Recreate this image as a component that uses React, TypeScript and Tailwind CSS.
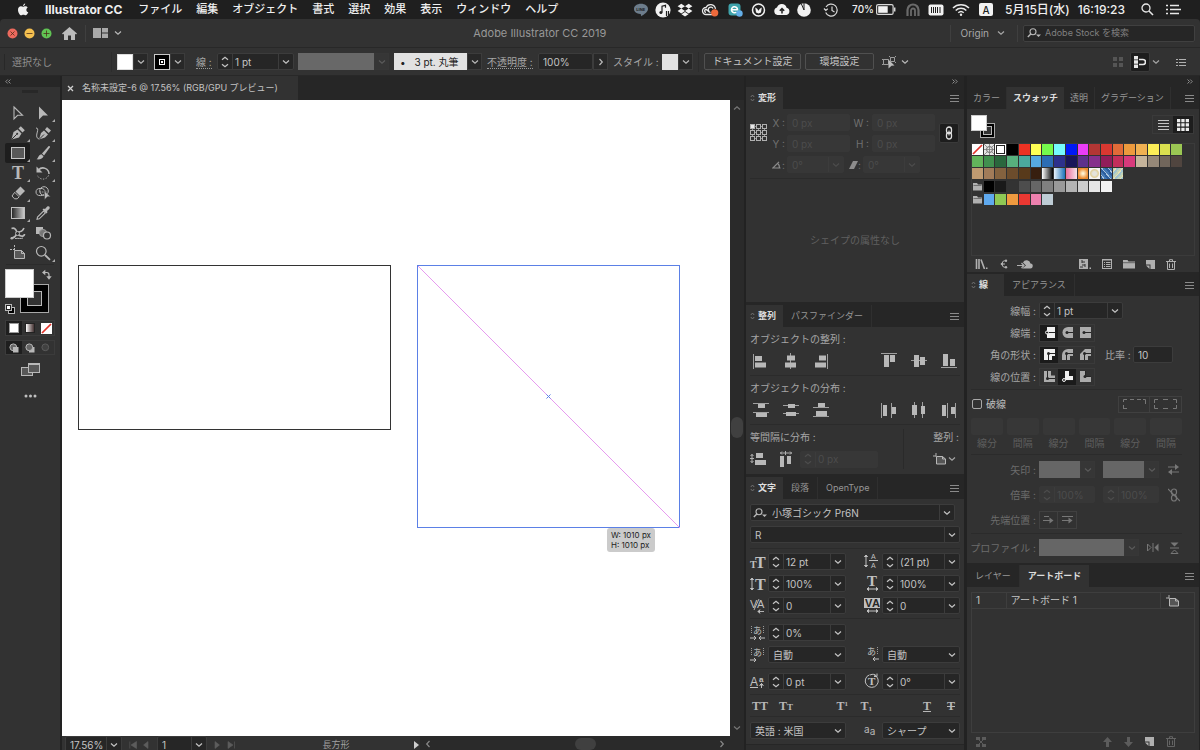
import type { ReactNode } from "react";

const FILE_MENUS = ["ファイル", "編集", "オブジェクト", "書式", "選択", "効果", "表示", "ウィンドウ", "ヘルプ"];

const SWATCH_ROWS: string[][] = [
  [
    "none", "registration", "white", "#000000", "#ec3223", "#ffff54", "#75fb4c", "#75fbfd", "#0019f5",
    "#ea3df7", "#b23634", "#d93831", "#e16b38", "#ed9a3d", "#f0b152", "#fcee57", "#dbe04f", "#9bc753",
  ],
  [
    "#62b45b", "#41904f", "#2a673d", "#57b07d", "#4ba99d", "#56a9e0", "#2c6db4", "#2d318c", "#1a1659",
    "#5d318c", "#86308c", "#911d5a", "#c32f5b", "#d83a7b", "#c5b49b", "#958878", "#71665b", "#50453f",
  ],
  [
    "#bf9a71", "#a17b59", "#84623f", "#6c4c2c", "#583a1b", "#371f0f",
    "linear-gradient(90deg,#ffffff,#000000)",
    "linear-gradient(90deg,#e8f2fb,#1c72b8)",
    "linear-gradient(90deg,#ec6f9c,#f5e3ea)",
    "radial-gradient(circle,#fff1d0 10%,#ee8b2f 70%)",
    "radial-gradient(circle,#e4e4dc 25%,#e0cf98 50%,#f4f4f4 65%)",
    "repeating-linear-gradient(50deg,#2d5f9e 0 2px,#a9c4de 2px 3px,#4479b5 3px 5px)",
    "repeating-linear-gradient(130deg,#c0d4b8 0 2px,#e8e0b0 2px 3px,#9fc4d0 3px 5px)",
  ],
];

const SWATCH_GROUPS: string[][] = [
  ["#000000", "#1a1a1a", "#333333", "#4d4d4d", "#666666", "#808080", "#999999", "#b3b3b3", "#cccccc", "#e6e6e6", "#f2f2f2"],
  ["#5fa9ee", "#8fc854", "#ef9a3f", "#eb3832", "#ed80ae", "#beccd5"],
];

const SERIF = "'Liberation Serif', serif";
const SANS = "'Liberation Sans', sans-serif";

function Svg({ w, h, children, className = "" }: { w: number; h: number; children: ReactNode; className?: string }) {
  return (
    <svg width={w} height={h} viewBox={`0 0 ${w} ${h}`} fill="none" className={`shrink-0 ${className}`} aria-hidden>
      {children}
    </svg>
  );
}

function Chevron({ className = "" }: { className?: string }) {
  return (
    <Svg w={8} h={6} className={className}>
      <path d="M1 1.5 4 4.3 7 1.5" stroke="currentColor" strokeWidth="1.2" />
    </Svg>
  );
}

function Steps({ label }: { label: string }) {
  return (
    <button aria-label={label} className="grid w-[15px] shrink-0 place-items-center border-r border-[#3c3c3c]">
      <Svg w={8} h={12}>
        <path d="M1 3.8 4 1.2l3 2.6M1 8.2l3 2.6 3-2.6" stroke="currentColor" strokeWidth="1.2" />
      </Svg>
    </button>
  );
}

function DropButton({ label, dim = false }: { label: string; dim?: boolean }) {
  return (
    <button
      aria-label={label}
      className={`grid h-[17px] w-[15px] shrink-0 place-items-center border ${
        dim ? "border-[#373737] bg-[#363636] text-[#5a5a5a]" : "border-[#3c3c3c] bg-[#282828] text-[#b9b9b9]"
      }`}
    >
      <Chevron />
    </button>
  );
}

function Field({
  label,
  value,
  className = "w-[78px]",
  steps = true,
  drop = true,
  dim = false,
}: {
  label: string;
  value: string;
  className?: string;
  steps?: boolean;
  drop?: boolean;
  dim?: boolean;
}) {
  return (
    <div
      className={`flex h-[17px] shrink-0 items-stretch rounded-[2px] border ${
        dim ? "border-[#373737] bg-[#373737] text-[#4c4c4c]" : "border-[#3c3c3c] bg-[#262626] text-[#c4c4c4]"
      } ${className}`}
    >
      {steps && <Steps label={`${label} 増減`} />}
      <input
        aria-label={label}
        defaultValue={value}
        className={`w-full min-w-0 bg-transparent text-[10px] leading-4 outline-none ${steps ? "pl-[2px]" : "pl-1"}`}
      />
      {drop && (
        <button aria-label={`${label} 一覧`} className="grid w-[15px] shrink-0 place-items-center border-l border-[#3c3c3c]">
          <Chevron />
        </button>
      )}
    </div>
  );
}

function Select({ label, value, className = "w-[78px]" }: { label: string; value: string; className?: string }) {
  return (
    <div className={`relative h-[17px] shrink-0 rounded-[2px] border border-[#3c3c3c] bg-[#262626] text-[#c4c4c4] ${className}`}>
      <select aria-label={label} className="block h-full w-full appearance-none bg-transparent pl-1 text-[10px] leading-4 outline-none">
        <option>{value}</option>
      </select>
      <Chevron className="pointer-events-none absolute right-[3px] top-[5px]" />
    </div>
  );
}

function Tabs({ items, active, collapsible = false, tight = false }: { items: string[]; active: number; collapsible?: boolean; tight?: boolean }) {
  return (
    <div role="tablist" className="flex h-[22px] shrink-0 items-stretch bg-[#262626] pr-[5px] text-[9px] leading-[22px]">
      {items.map((t, i) => {
        const on = i === active;
        return (
          <button
            key={t}
            role="tab"
            aria-selected={on}
            className={`flex shrink-0 items-center ${
              on && collapsible ? "min-w-[37px] gap-[3px] pl-1 pr-[6px]" : tight ? "px-[6px]" : "px-2"
            } ${on ? "bg-[#323232] font-semibold text-[#dedede]" : "border-r border-[#2f2f2f] text-[#969696]"}`}
          >
            {on && collapsible && (
              <Svg w={5} h={8}>
                <path d="M.8 3 2.5 1l1.700 2M.8 5l1.700 2 1.700-2" stroke="#777" strokeWidth=".9" />
              </Svg>
            )}
            {t}
          </button>
        );
      })}
      <button aria-label="パネルメニュー" className="ml-auto">
        <Svg w={9} h={8}>
          <path d="M0 1.500h9M0 4.500h9M0 7.500h9" stroke="#8a8a8a" />
        </Svg>
      </button>
    </div>
  );
}

function Divider({ className = "" }: { className?: string }) {
  return <hr className={`border-0 border-t border-[#2b2b2b] ${className}`} />;
}

/* ---------- macOS menu bar ---------- */

function MenuBar() {
  return (
    <header className="flex h-[19px] shrink-0 items-center whitespace-nowrap bg-[#1f1f1f] pl-[17px] pr-[19px] text-[11px] font-medium leading-[19px] text-[#efefef]">
      <Svg w={12} h={14}>
        <path
          fill="#efefef"
          d="M8.2.6c.1 1-.8 2.400-2.200 2.500C5.900 2 7 .8 8.200.6ZM6.100 3.800c.6 0 1.200-.6 2.200-.6 1 0 1.900.5 2.400 1.300-2 1.300-1.700 4 .6 4.800-.6 1.500-1.600 3-2.700 3-.9 0-1.100-.5-2.200-.5s-1.400.5-2.200.5C2.800 12.300 1 9.200 1 6.900c0-2.300 1.400-3.600 2.900-3.600.9 0 1.600.5 2.200.5Z"
        />
      </Svg>
      <b className="ml-4 mr-[9px] text-xs font-bold leading-[19px]">Illustrator CC</b>
      <nav className="flex">
        {FILE_MENUS.map((m) => (
          <button key={m} className="px-[7px]">
            {m}
          </button>
        ))}
      </nav>
      <div className="ml-auto flex items-center">
        <Svg w={16} h={14} className="mr-[6px]">
          <path d="M8 .8c4 0 7 2.200 7 5.200 0 2.700-3.500 5.400-7 7.200.3-1.400 0-2-.7-2.200C3.600 10.600 1 8.800 1 6c0-3 3-5.200 7-5.200Z" fill="#6d7d8c" />
          <text x="3.300" y="7.800" fontSize="4" fontWeight="700" fill="#1f1f1f">LINE</text>
        </Svg>
        <Svg w={17} h={16} className="mr-[5px]">
          <circle cx="8" cy="8" r="7.600" fill="#f2f2f2" />
          <path d="M7 10.500V4.200l3.500-.9v2.500M11.500 9v5M13.500 9v5" stroke="#1f1f1f" strokeWidth="1.200" />
          <circle cx="5.900" cy="10.500" r="1.500" fill="#1f1f1f" />
        </Svg>
        <Svg w={16} h={14} className="mr-[8px]">
          <path d="m4.300.8 3.700 2.400-3.700 2.400L.6 3.200Zm7.400 0 3.700 2.400-3.700 2.400L8 3.200ZM4.300 5.600 8 8l-3.700 2.400L.6 8Zm7.400 0L15.400 8l-3.700 2.400L8 8ZM8 9l3.500 2.300L8 13.500l-3.500-2.200Z" fill="#f2f2f2" />
        </Svg>
        <Svg w={18} h={14} className="mr-[9px]">
          <path d="M5 11.500a3.500 3.500 0 0 1 0-7 5 5 0 0 1 9.500 1.300M5 9.300a1.400 1.400 0 0 1 0-2.800c1.200 0 2.300 2.800 4.500 2.800M12 5.500a2.500 2.500 0 1 0-3.500 3.300M5 11.500h6" stroke="#e8e8e8" strokeWidth="1.300" />
          <circle cx="13.700" cy="9.800" r="3.600" fill="#ee6a3c" />
        </Svg>
        <Svg w={15} h={14} className="mr-[8px]">
          <rect x=".5" y=".5" width="12" height="12" rx="3" fill="#3fa3ab" />
          <path d="M3.500 6.800h6a3 3 0 1 0-1 2.200" stroke="#fff" strokeWidth="1.600" />
          <circle cx="11.500" cy="10.500" r="3.200" fill="#64aee8" />
        </Svg>
        <Svg w={15} h={14} className="mr-[7px]">
          <circle cx="7.500" cy="7" r="6" stroke="#f2f2f2" strokeWidth="1.500" />
          <path d="M4.200 4.500 5 9.500l2.500 1 2.500-1 .8-5-2 1.200-1.300 2-1.300-2Z" fill="#f2f2f2" />
        </Svg>
        <Svg w={18} h={13} className="mr-[6px]">
          <path d="M4.500 12A3.800 3.800 0 0 1 4 4.600a5 5 0 0 1 9.600.2A3.700 3.700 0 0 1 13.500 12Z" fill="#f2f2f2" />
          <path d="M9 10.500V6M6.800 7.700 9 5.500l2.200 2.200" stroke="#1f1f1f" strokeWidth="1.500" />
        </Svg>
        <Svg w={14} h={14} className="mr-[12px]">
          <circle cx="7" cy="7" r="6.800" fill="#f2f2f2" />
          <path d="M7 7 4.200.5M7 7V0" stroke="#1f1f1f" strokeWidth="1" />
        </Svg>
        <Svg w={16} h={14} className="mr-[13px]">
          <path d="M3 4a6 6 0 1 1-.3 5.500M1 5.500l1.800 2 2-1.700M9 3.500v4l2.500 1.500" stroke="#d8d8d8" strokeWidth="1.200" />
        </Svg>
        <span className="mr-[2px] text-[10px]">70%</span>
        <Svg w={20} h={11} className="mr-[10px]">
          <rect x=".6" y=".6" width="16.500" height="9.800" rx="1.500" stroke="#d8d8d8" strokeWidth="1.200" />
          <rect x="2.200" y="2.200" width="9.500" height="6.600" fill="#f2f2f2" />
          <path d="M18.700 3.500v4" stroke="#d8d8d8" strokeWidth="1.500" />
        </Svg>
        <Svg w={14} h={14} className="mr-[8px]">
          <path d="M1.500 13V7a5.500 5.500 0 0 1 11 0v6" stroke="#6a6a6a" strokeWidth="2.200" />
          <path d="M5 13V7.500a2 2 0 0 1 4 0V13" stroke="#6a6a6a" strokeWidth="1.800" />
        </Svg>
        <Svg w={16} h={12} className="mr-[8px]">
          <rect x=".5" y=".5" width="15" height="11" rx="2" fill="#f2f2f2" />
          <path d="M3.500 3v6M5.500 3v6M7.500 3v6M9.500 3v6M12 3v6" stroke="#1f1f1f" />
        </Svg>
        <Svg w={18} h={13} className="mr-[9px]">
          <path d="M1 5a11.500 11.500 0 0 1 16 0M3.700 7.500a7.500 7.500 0 0 1 10.600 0M6.300 9.800a3.900 3.900 0 0 1 5.400 0" stroke="#e8e8e8" strokeWidth="1.500" />
          <circle cx="9" cy="11.700" r="1.200" fill="#e8e8e8" />
        </Svg>
        <span className="mr-[12px] grid h-[13px] w-[14px] place-items-center rounded-[2px] bg-[#f2f2f2] text-[10px] leading-none text-[#1f1f1f]">A</span>
        <span className="mr-[8px] text-xs leading-[19px]">5月15日(水)</span>
        <span className="mr-4 text-xs leading-[19px]">16:19:23</span>
        <Svg w={13} h={13} className="mr-[12px]">
          <circle cx="5" cy="5" r="4" stroke="#e8e8e8" strokeWidth="1.300" />
          <path d="m8 8 4 4" stroke="#e8e8e8" strokeWidth="1.600" />
        </Svg>
        <Svg w={15} h={11}>
          <path d="M4 1.500h9M4 5.500h11M4 9.500h9M0 1.500h2M0 5.500h2M0 9.500h2" stroke="#e8e8e8" strokeWidth="1.700" />
        </Svg>
      </div>
    </header>
  );
}

function TitleBar() {
  return (
    <div className="flex h-[29px] shrink-0 items-center rounded-t border-b border-[#282828] bg-[#323232] pl-[7px] pr-[5px]">
      <div className="flex gap-[6px]">
        {[
          ["#ec6a5e", "m3.500 3.500 4 4m0-4-4 4", "閉じる"],
          ["#f4bf4f", "M2.500 5.500h6", "しまう"],
          ["#61c454", "M2.500 5.500h6m-3-3v6", "拡大"],
        ].map(([fill, d, name]) => (
          <button key={fill} aria-label={name}>
            <Svg w={11} h={11}>
              <circle cx="5.500" cy="5.500" r="5" fill={fill} />
              <path d={d} stroke="#4a2a16" strokeWidth="1" opacity=".75" />
            </Svg>
          </button>
        ))}
      </div>
      <button aria-label="ホーム" className="ml-[10px]">
        <Svg w={15} h={13}>
          <path d="M7.500 0 15 6.500l-1 1-1-.8V13H9V8.500H6V13H2V6.700l-1 .8-1-1Z" fill="#bcbcbc" />
        </Svg>
      </button>
      <span className="ml-2 mr-[7px] h-[17px] w-px bg-[#3f3f3f]" />
      <button aria-label="ワークスペース配置" className="flex items-center gap-[6px] text-[#b9b9b9]">
        <Svg w={15} h={10}>
          <path d="M0 0h8v10H0ZM9 0h6v4.500H9ZM9 5.500h6V10H9Z" fill="#a9a9a9" />
        </Svg>
        <Chevron />
      </button>
      <h1 className="flex-1 pl-2 text-center text-[11px] leading-4 text-[#989898]">Adobe Illustrator CC 2019</h1>
      <span className="mr-[10px] h-[17px] w-px bg-[#3f3f3f]" />
      <button className="flex items-center gap-2 text-[10px] leading-4 text-[#a8a8a8]">
        Origin <Chevron />
      </button>
      <span className="ml-3 mr-[5px] h-[17px] w-px bg-[#3f3f3f]" />
      <label className="flex h-[17px] w-[172px] items-center gap-1 rounded-[2px] border border-[#404040] bg-[#262626] pl-[3px]">
        <SearchGlyph />
        <input placeholder="Adobe Stock を検索" className="w-full min-w-0 bg-transparent text-[9px] leading-4 outline-none placeholder:text-[#808080]" />
      </label>
    </div>
  );
}

function SearchGlyph() {
  return (
    <Svg w={14} h={10}>
      <circle cx="6" cy="3.800" r="3" stroke="#b9b9b9" strokeWidth="1.100" />
      <path d="M3.800 6 .8 9" stroke="#b9b9b9" strokeWidth="1.400" />
      <path d="M9 6.500h5l-2.500 2.500Z" fill="#b9b9b9" />
    </Svg>
  );
}

function ControlBar() {
  return (
    <div className="flex h-[28px] shrink-0 items-center whitespace-nowrap border-b border-[#282828] bg-[#323232] pr-[14px] text-[10px] leading-4 text-[#a6a6a6]">
      <span className="ml-1 mr-[7px] h-4 w-px bg-[#282828]" />
      <span className="w-[99px] text-[#8f8f8f]">選択なし</span>
      <span className="mr-[5px] h-5 w-px bg-[#2c2c2c]" />
      <button aria-label="塗り" className="h-4 w-4 border border-[#ddd] bg-white" />
      <DropButton label="塗り 一覧" />
      <button aria-label="線の色" className="ml-[6px] grid h-4 w-4 place-items-center border border-[#c8c8c8] bg-black">
        <span className="grid h-[6px] w-[6px] place-items-center border border-white bg-black">
          <span className="h-[2px] w-[2px] bg-white" />
        </span>
      </button>
      <DropButton label="線の色 一覧" />
      <span className="ml-[11px] w-[21px]">
        <span className="border-b border-dotted border-[#999]">線 :</span>
      </span>
      <Field label="線幅" value="1 pt" className="w-[77px]" />
      <span className="ml-1 h-[17px] w-[76px] bg-[#686868]" />
      <DropButton label="可変線幅プロファイル" dim />
      <button className="ml-[5px] h-[17px] w-[73px] bg-[#e2e2e2] text-left text-[#222]">
        <span className="px-[6px]">•</span> 3 pt. 丸筆
      </button>
      <DropButton label="ブラシ定義" />
      <span className="ml-[5px] w-[51px]">
        <span className="border-b border-dotted border-[#999]">不透明度 :</span>
      </span>
      <Field label="不透明度" value="100%" className="w-[55px]" steps={false} drop={false} />
      <button aria-label="不透明度スライダー" className="grid h-[17px] w-[15px] place-items-center border border-[#3c3c3c] bg-[#282828] text-[#b9b9b9]">
        <Chevron className="-rotate-90" />
      </button>
      <span className="ml-[5px] w-[49px]">スタイル :</span>
      <button aria-label="グラフィックスタイル" className="h-4 w-4 bg-[#e2e2e2]" />
      <DropButton label="グラフィックスタイル 一覧" />
      <span className="mx-[5px] h-5 w-px bg-[#2c2c2c]" />
      <button className="h-[17px] w-[97px] rounded-[2px] border border-[#505050] leading-[15px] text-[#c4c4c4]">ドキュメント設定</button>
      <button className="ml-1 h-[17px] w-[69px] rounded-[2px] border border-[#505050] leading-[15px] text-[#c4c4c4]">環境設定</button>
      <button aria-label="類似オブジェクトを選択" className="ml-2 flex items-center gap-1 text-[#b9b9b9]">
        <Svg w={15} h={14}>
          <path d="M1.500 4.500h5v5h-5ZM8.500 2.500h4v4h-4ZM0 4.500h1.500M0 9.500h1.500M7 1l1.500 1.500M14 1l-1.500 1.500M14 8l-1.500-1.500" stroke="#9c9c9c" />
          <path d="m6.500 4.500 6 6-3 .2-3 2.800Z" fill="#bdbdbd" />
        </Svg>
        <Chevron />
      </button>
      <Svg w={11} h={10} className="ml-auto">
        <path d="M0 0h4v4H0ZM6 0h4v4H6ZM0 6h4v4H0ZM6 6h4v4H6Z" fill="#555" />
      </Svg>
      <button aria-label="整列オプション" className="ml-[6px] grid h-5 w-5 place-items-center rounded-[2px] border border-[#3a3a3a] bg-[#1d1d1d]">
        <Svg w={12} h={12}>
          <path d="M0 0h4v3.500H0ZM0 4.300h4v3.500H0ZM0 8.500h4V12H0Z" fill="#e8e8e8" />
          <path d="M5 3.500h4a2.500 2.500 0 0 1 0 5H5" stroke="#e8e8e8" strokeWidth="1.600" />
        </Svg>
      </button>
      <Chevron className="ml-[2px]" />
      <button aria-label="コントロールメニュー" className="ml-4">
        <Svg w={10} h={8}>
          <path d="M3 1.500h7M3 4.500h7M3 7.500h7M0 1.500h2M0 4.500h2M0 7.500h2" stroke="#b0b0b0" />
        </Svg>
      </button>
    </div>
  );
}

/* ---------- Tool palette ---------- */

const FILL = "#b8b8b8";

const TOOLS: Array<{ name: string; more?: boolean; art: ReactNode }> = [
  { name: "選択", art: <path d="m4 2 8.500 8.300H7.600L4 14Z" stroke={FILL} strokeWidth="1.100" /> },
  { name: "ダイレクト選択", more: true, art: <path d="m4 1.500 9 9H8l-4 4Z" fill={FILL} /> },
  {
    name: "ペン",
    more: true,
    art: (
      <>
        <path d="M1.500 14.500 3.500 7l4-2.500 4 4L9 12.500Z" fill={FILL} />
        <path d="m8.500 3.500 2.300-2.300 4 4-2.300 2.300Z" fill={FILL} />
        <path d="M1.500 14.500 6.800 9.200" stroke="#323232" />
        <circle cx="7.200" cy="8.800" r="1" fill="#323232" />
      </>
    ),
  },
  {
    name: "曲線",
    more: true,
    art: (
      <>
        <path d="M4 14.500 6 8l3-2.500 4 4L10 12.500Z" fill={FILL} />
        <path d="m10 4.500 2-2.500 4 3.500-2.300 2.500Z" fill={FILL} />
        <path d="M4.500 14 9 9.500" stroke="#323232" />
        <path d="M1 3c2 0 2 1.500 1.300 4-.6 2.500-1.600 6 1.700 7" stroke={FILL} />
      </>
    ),
  },
  { name: "長方形", more: true, art: <rect x="1.500" y="2.500" width="13" height="11" fill="#585858" stroke="#c6c6c6" /> },
  {
    name: "ブラシ",
    more: true,
    art: (
      <>
        <path d="m7 8.500 6.500-7.300c.8-.6 1.800.3 1.300 1.200L9 10.500Z" fill={FILL} />
        <path d="M6.300 9.200 8.500 11.300C8 13.500 5 14.800 1.500 14.300 3.500 13.300 3 10 6.300 9.200Z" fill={FILL} />
      </>
    ),
  },
  {
    name: "文字",
    more: true,
    art: (
      <text x="8" y="14" textAnchor="middle" fontSize="18" fontWeight="700" fontFamily={SERIF} fill={FILL}>
        T
      </text>
    ),
  },
  {
    name: "回転",
    more: true,
    art: (
      <>
        <path d="M3.500 5a6 6 0 0 1 10.500 4" stroke={FILL} strokeWidth="1.500" />
        <path d="M1.500 1.500v6h6Z" fill={FILL} />
        <path d="M13.500 10.500A6 6 0 0 1 2.300 10" stroke={FILL} strokeDasharray="1.300 1.500" />
      </>
    ),
  },
  {
    name: "消しゴム",
    more: true,
    art: (
      <>
        <path d="m5.500 6.500 5-5 4.500 4.500-5 5Z" fill={FILL} />
        <path d="m4.700 7.300 4.500 4.500-2 2H4.500L2 11Z" stroke={FILL} />
      </>
    ),
  },
  {
    name: "シェイプ形成",
    art: (
      <>
        <ellipse cx="5.500" cy="7" rx="4.500" ry="3.600" stroke={FILL} />
        <circle cx="9" cy="6" r="4.300" stroke={FILL} />
        <path d="M5 7h7" stroke={FILL} strokeDasharray="1.200 1" />
        <path d="m9.500 6 6 5.700h-3l-3 3Z" fill={FILL} stroke="#323232" strokeWidth=".5" />
      </>
    ),
  },
  {
    name: "グラデーション",
    more: true,
    art: (
      <>
        <defs>
          <linearGradient id="toolGradient">
            <stop stopColor="#222" />
            <stop offset="1" stopColor="#d0d0d0" />
          </linearGradient>
        </defs>
        <rect x="1.500" y="2.500" width="13" height="11" fill="url(#toolGradient)" stroke="#c0c0c0" />
      </>
    ),
  },
  {
    name: "スポイト",
    art: (
      <>
        <path d="M2 14.300 2.500 12l6-6L10.300 8l-6 5.800Z" stroke={FILL} strokeWidth="1.100" />
        <path d="m7.500 4.500 1.300-1 1.200.6 2-2.300c2-1.300 3.500.5 2.300 2.200L12 6l.5 1.300-1.200 1.200Z" fill={FILL} />
      </>
    ),
  },
  {
    name: "パペットワープ",
    art: (
      <>
        <path d="M1.500 3.500c3-1 4.500.5 5.500 4 .5 2 2 3 4 3.500 2 .4 3.500-.5 3.500-2" stroke={FILL} strokeWidth="1.700" />
        <path d="M1 13c2.500.5 4-1 5.500-3.500 1.500-2.500 2.500-3 4-3 1.800 0 2.500-1.500 3.500-3.500" stroke={FILL} strokeWidth="1.500" />
        <path d="M5 13.500c3-.5 6 .5 8-.5" stroke={FILL} />
        <circle cx="7.500" cy="8.500" r="2" fill="#323232" stroke={FILL} />
        <circle cx="1.800" cy="13.300" r="1.300" fill={FILL} />
      </>
    ),
  },
  {
    name: "ブレンド",
    art: (
      <>
        <rect x="1" y="2" width="7" height="7" fill={FILL} />
        <circle cx="8" cy="8" r="3.600" fill="#777" stroke="#999" />
        <circle cx="12" cy="10.500" r="3.500" fill="#323232" stroke={FILL} strokeWidth="1.200" />
      </>
    ),
  },
  {
    name: "アートボード",
    art: (
      <>
        <path d="M4.500 0v5M0 4.500h4" stroke={FILL} strokeDasharray="2 1" />
        <path d="M4.500 5.500h7l3 3v5h-10Z" fill="#585858" stroke={FILL} />
        <path d="M11.500 5.500v3h3" stroke={FILL} />
      </>
    ),
  },
  {
    name: "ズーム",
    more: true,
    art: (
      <>
        <circle cx="6.300" cy="6.300" r="4.800" stroke={FILL} strokeWidth="1.200" />
        <path d="m10 10 5 4.800" stroke={FILL} strokeWidth="1.800" />
      </>
    ),
  },
];

function ToolPalette() {
  return (
    <aside className="flex w-[62px] shrink-0 flex-col border-r-2 border-[#222] bg-[#323232]">
      <div className="flex h-[11px] shrink-0 items-center bg-[#262626] pl-[5px]">
        <Svg w={6} h={5}>
          <path d="M2.800.5.800 2.500l2 2M5.500.5l-2 2 2 2" stroke="#999" strokeWidth=".9" />
        </Svg>
      </div>
      <div className="mx-auto mb-[10px] mt-[3px] h-[3px] w-4 shrink-0 bg-[#282828]" />
      <div className="ml-[5px] grid w-[50px] grid-cols-2">
        {TOOLS.map((t) => (
          <button
            key={t.name}
            aria-label={t.name}
            className={`relative flex h-5 items-center justify-center rounded-[2px] ${t.name === "長方形" ? "bg-[#1e1e1e]" : ""}`}
          >
            <Svg w={16} h={16} className="overflow-visible">
              {t.art}
            </Svg>
            {t.more && (
              <Svg w={3} h={3} className="absolute bottom-[1px] right-0">
                <path d="M3 0v3H0Z" fill="#aaa" />
              </Svg>
            )}
          </button>
        ))}
      </div>
      <Divider className="mx-[6px] mt-[1px]" />
      <div className="relative ml-[5px] mt-1 h-[45px] w-[50px] shrink-0">
        <button aria-label="線" className="absolute left-[15px] top-[15px] grid h-[29px] w-[29px] place-items-center border border-[#a8a8a8] bg-black">
          <span className="h-[15px] w-[15px] border border-[#b8b8b8] bg-[#323232]" />
        </button>
        <button aria-label="塗り" className="absolute left-0 top-0 h-[29px] w-[29px] border border-[#ccc] bg-white" />
        <button aria-label="塗りと線を入れ替え" className="absolute right-[3px] top-0">
          <Svg w={10} h={11}>
            <path d="M2.500 3.500h2.300C6.300 3.500 7 4.300 7 6v2" stroke={FILL} strokeWidth="1.200" />
            <path d="M3.300.8v5.400L0 3.500ZM4.300 7.300h5.400L7 10.800Z" fill={FILL} />
          </Svg>
        </button>
        <button aria-label="初期設定の塗りと線" className="absolute bottom-0 left-0">
          <Svg w={10} h={11}>
            <rect x="3.500" y="4.500" width="6" height="6" fill="#000" stroke={FILL} />
            <rect x=".5" y="1.500" width="6" height="6" fill="#222" stroke={FILL} />
            <rect x="2" y="3" width="3" height="3" fill="#fff" />
          </Svg>
        </button>
      </div>
      <div className="ml-[5px] mt-[6px] grid h-4 w-[50px] shrink-0 grid-cols-3 border border-[#3b3b3b]">
        <button aria-label="カラー" className="grid place-items-center bg-[#1e1e1e]">
          <span className="h-[10px] w-[10px] border border-[#999] bg-white" />
        </button>
        <button aria-label="グラデーション塗り" className="grid place-items-center">
          <span className="h-[10px] w-[10px] border border-[#222] bg-linear-to-r from-white to-[#433]" />
        </button>
        <button aria-label="なし" className="grid place-items-center">
          <NoneSwatch />
        </button>
      </div>
      <div className="ml-[5px] mt-1 grid h-[15px] w-[50px] shrink-0 grid-cols-3 border border-[#3b3b3b]">
        {["標準描画", "背面描画", "内側描画"].map((n, i) => (
          <button key={n} aria-label={n} className={`grid place-items-center ${i === 0 ? "bg-[#1e1e1e]" : ""}`}>
            <Svg w={10} h={10} className={i === 2 ? "opacity-30" : ""}>
              {i === 1 && <rect x="4" y="4" width="5.500" height="5.500" fill={FILL} />}
              <circle cx="4.300" cy="4.300" r="3.400" fill="#666" stroke={FILL} />
              {i === 0 && <rect x="4" y="4" width="5.500" height="5.500" fill={FILL} />}
            </Svg>
          </button>
        ))}
      </div>
      <button aria-label="スクリーンモード" className="mx-auto mt-2">
        <Svg w={19} h={14}>
          <rect x=".5" y="4.500" width="11" height="8" fill="#585858" stroke={FILL} />
          <rect x="7.500" y=".5" width="11" height="9" fill="#585858" stroke={FILL} />
          <path d="M7 1.500h12" stroke={FILL} />
        </Svg>
      </button>
      <button aria-label="ツールバーを編集" className="mx-auto mt-[17px]">
        <Svg w={13} h={4}>
          <circle cx="2" cy="2" r="1.500" fill="#c0c0c0" />
          <circle cx="6.500" cy="2" r="1.500" fill="#c0c0c0" />
          <circle cx="11" cy="2" r="1.500" fill="#c0c0c0" />
        </Svg>
      </button>
    </aside>
  );
}

function NoneSwatch() {
  return (
    <Svg w={11} h={11}>
      <rect width="11" height="11" fill="#fff" />
      <path d="M1 10 10 1" stroke="#e3342b" strokeWidth="1.700" />
    </Svg>
  );
}

/* ---------- Document window ---------- */

function DocumentWindow() {
  return (
    <main className="flex min-w-0 flex-1 flex-col bg-[#262626]">
      <div className="flex h-6 shrink-0">
        <div className="flex items-center gap-2 bg-[#323232] pl-[5px] pr-5 text-[9px] text-[#c4c4c4]">
          <button aria-label="ドキュメントを閉じる">
            <Svg w={7} h={7}>
              <path d="m1 1 5 5m0-5L1 6" stroke="#d0d0d0" strokeWidth="1.300" />
            </Svg>
          </button>
          名称未設定-6 @ 17.56% (RGB/GPU プレビュー)
        </div>
      </div>
      <div className="flex min-h-0 flex-1">
        <div className="relative min-w-0 flex-1 overflow-hidden bg-white">
          <Svg w={668} h={636}>
            <rect x="16.500" y="165.500" width="312" height="164" stroke="#333" />
            <rect x="355.500" y="165.500" width="262" height="262" stroke="#5b80e6" />
            <path d="m356 166 262 262" stroke="#e79bf0" />
            <path d="m484.500 294.500 4 4m0-4-4 4" stroke="#5b80e6" />
          </Svg>
          <div className="absolute left-[545px] top-[428px] rounded-[3px] bg-[#cbcbcb] px-1 py-[2px] text-[8px] leading-[10px] text-[#222]">
            W: 1010 px
            <br />
            H: 1010 px
          </div>
        </div>
        <div className="flex w-[14px] shrink-0 flex-col items-center justify-between bg-[#2a2a2a] py-[5px] text-[#777]">
          <Chevron className="rotate-180" />
          <span className="mt-[18px] h-[21px] w-3 rounded-md bg-[#404040]" />
          <Chevron />
        </div>
      </div>
      <footer className="flex h-[14px] shrink-0 items-start overflow-hidden bg-[#2a2a2a] text-[#b0b0b0]">
        <div className="flex h-[17px] w-[358px] items-center bg-[#323232] pl-[3px]">
          <Field label="ズーム" value="17.56%" className="w-[57px]" steps={false} />
          <Svg w={24} h={8} className="ml-[7px]">
            <path d="M.8.500v7M7.500.500v7L2 4ZM19 .5v7L14.500 4Z" fill="#5c5c5c" stroke="#5c5c5c" strokeWidth=".6" />
          </Svg>
          <Field label="アートボード番号" value="1" className="ml-1 w-[50px]" steps={false} />
          <Svg w={22} h={8} className="ml-[7px]">
            <path d="M1 .5v7L5.500 4ZM14 .5v7L19 4ZM20.500.500v7" fill="#5c5c5c" stroke="#5c5c5c" strokeWidth=".6" />
          </Svg>
          <span className="flex-1 pl-[22px] text-center text-[9px] leading-4 text-[#a0a0a0]">長方形</span>
          <Svg w={6} h={8}>
            <path d="M0 0v8l5-4Z" fill="#d0d0d0" />
          </Svg>
        </div>
        <div className="flex h-[15px] flex-1 items-center justify-between pl-1 pr-[18px] text-[#888]">
          <Chevron className="rotate-90" />
          <span className="ml-5 h-3 w-[21px] rounded-full bg-[#404040]" />
          <Chevron className="-rotate-90" />
        </div>
      </footer>
    </main>
  );
}

/* ---------- Transform / Align / Character ---------- */

function CollapseStrip() {
  return (
    <div className="flex h-[11px] shrink-0 items-center justify-end bg-[#262626] pr-[6px]">
      <Svg w={6} h={5}>
        <path d="m.5.500 2 2-2 2M3.200.500l2 2-2 2" stroke="#999" strokeWidth=".9" />
      </Svg>
    </div>
  );
}

function TransformPanel() {
  return (
    <section className="flex h-[215px] shrink-0 flex-col bg-[#323232]">
      <Tabs items={["変形"]} active={0} collapsible />
      <div className="flex pl-1 pr-[5px] pt-[5px]">
        <Svg w={17} h={17} className="mt-[10px]">
          <path d="M2.500 2.500h12v12h-12ZM8.500 2.500v12M2.500 8.500h12" stroke="#909090" />
          {[2.5, 8.5, 14.5].map((y) =>
            [2.5, 8.5, 14.5].map((x) => (
              <rect key={`${x}-${y}`} x={x - 2} y={y - 2} width="4" height="4" fill={x + y === 5 ? "#e8e8e8" : "#323232"} stroke="#b0b0b0" />
            )),
          )}
        </Svg>
        <div className="flex flex-1 flex-col gap-1 text-[10px] leading-4 text-[#707070]">
          {[
            ["X :", "W :"],
            ["Y :", "H :"],
          ].map(([a, b]) => (
            <div key={a} className="flex items-center">
              <span className="w-5 pr-[2px] text-right">{a}</span>
              <Field label={a} value="0 px" dim steps={false} drop={false} className="w-[63px]" />
              <span className="w-[22px] pr-[3px] text-right">{b}</span>
              <Field label={b} value="0 px" dim steps={false} drop={false} className="w-[63px]" />
            </div>
          ))}
          <div className="flex items-center">
            <span className="flex w-5 items-center justify-end pr-[2px]">
              <Svg w={10} h={8}>
                <path d="M8.500 7H.8L7 .8M5.500 2.300c1.500 1 2 2.700 2 4.700" stroke="#8c8c8c" strokeWidth="1.200" />
              </Svg>
              :
            </span>
            <Field label="回転角度" value="0°" dim steps={false} className="w-[57px]" />
            <span className="flex w-[19px] items-center justify-end pr-[2px]">
              <Svg w={9} h={8}>
                <path d="M4 0h5L5 8H0Z" fill="#8c8c8c" />
              </Svg>
              :
            </span>
            <Field label="シアー" value="0°" dim steps={false} className="w-[57px]" />
          </div>
        </div>
        <button aria-label="縦横比を固定" className="mt-[9px] grid h-5 w-5 place-items-center rounded-[2px] border border-[#3a3a3a] bg-[#1d1d1d]">
          <Svg w={8} h={14}>
            <rect x="1.500" y="1" width="5" height="6.500" rx="2.500" stroke="#e0e0e0" strokeWidth="1.300" />
            <rect x="1.500" y="6.500" width="5" height="6.500" rx="2.500" stroke="#e0e0e0" strokeWidth="1.300" />
            <path d="M4 4.500v5" stroke="#e0e0e0" />
          </Svg>
        </button>
      </div>
      <Divider className="mx-1 mt-[5px]" />
      <p className="grid flex-1 place-items-center text-[10px] text-[#606060]">シェイプの属性なし</p>
    </section>
  );
}

/* name, filled blocks, stroked guides */
const ALIGN: Array<[string, string, string]> = [
  ["水平方向左に整列", "M2 3h7v5H2ZM2 9.500h11v5H2Z", "M.5 1v15"],
  ["水平方向中央に整列", "M4 2.500h8v5H4ZM2 9.500h11v5H2Z", "M7.500 0v16"],
  ["水平方向右に整列", "M6 2.500h7v5H6ZM2 9.500h11v5H2Z", "M14.500 1v15"],
  ["垂直方向上に整列", "M3 2h5v12H3ZM9 2h5v7H9Z", "M0 .5h16"],
  ["垂直方向中央に整列", "M3 2h5v12H3ZM9 4h5v8H9Z", "M0 7.500h16"],
  ["垂直方向下に整列", "M2 1h5v12H2ZM9 6h5v7H9Z", "M0 14.500h16"],
];

const DISTRIBUTE: Array<[string, string, string]> = [
  ["垂直方向上に分布", "M5 2h7v4H5ZM3 11h11v4H3Z", "M0 1.500h16M0 10.500h16"],
  ["垂直方向中央に分布", "M5 2h7v4H5ZM3 10h10v4H3Z", "M0 3.500h16M0 11.500h16"],
  ["垂直方向下に分布", "M5 1h7v4H5ZM3 9h11v5H3Z", "M0 5.500h16M0 14.500h16"],
  ["水平方向左に分布", "M2 3h4v11H2ZM11 5h4v7h-4Z", "M.5 1v15M10.500 1v15"],
  ["水平方向中央に分布", "M1 3h5v10H1ZM10 4h4v8h-4Z", "M3.500 0v16M11.500 0v16"],
  ["水平方向右に分布", "M1 3h4v11H1ZM10 5h4v7h-4Z", "M6.500 1v15M14.500 1v15"],
];

function AlignRow({ items }: { items: Array<[string, string, string]> }) {
  return (
    <div className="flex h-7 items-center">
      {items.map(([name, fill, line], i) => (
        <button key={name} aria-label={name} className={`grid w-[30px] place-items-center ${i === 3 ? "ml-auto" : ""}`}>
          <Svg w={16} h={16}>
            <path d={line} stroke="#a0a0a0" />
            <path d={fill} fill="#b8b8b8" />
          </Svg>
        </button>
      ))}
    </div>
  );
}

function AlignPanel() {
  return (
    <section className="mt-[3px] h-[169px] shrink-0 bg-[#323232] text-[10px] leading-4 text-[#a6a6a6]">
      <Tabs items={["整列", "パスファインダー"]} active={0} collapsible />
      <p className="pl-1 pt-1">オブジェクトの整列 :</p>
      <AlignRow items={ALIGN} />
      <Divider className="mx-1" />
      <p className="pl-1 pt-1">オブジェクトの分布 :</p>
      <AlignRow items={DISTRIBUTE} />
      <Divider className="mx-1" />
      <div className="flex">
        <div className="flex-1 pl-1 pt-1">
          <p>等間隔に分布 :</p>
          <div className="flex h-7 items-center">
            <button aria-label="垂直方向等間隔に分布" className="mr-3">
              <Svg w={16} h={16}>
                <path d="M6 2h7v5H6ZM5 9h11v5H5Z" fill="#b8b8b8" />
                <path d="M2 3v9M.5 5 2 3.500 3.500 5M.5 10 2 11.500 3.500 10M0 7.500h4" stroke="#b0b0b0" />
              </Svg>
            </button>
            <button aria-label="水平方向等間隔に分布" className="mr-[6px]">
              <Svg w={16} h={16}>
                <path d="M2 5h4v11H2ZM9 5h4v8H9Z" fill="#b8b8b8" />
                <path d="M2 2h12M4 .5 2.500 2 4 3.500M12 .5 13.500 2 12 3.500M7.500 0v4" stroke="#b0b0b0" />
              </Svg>
            </button>
            <Field label="間隔値" value="0 px" dim drop={false} />
          </div>
        </div>
        <span className="mt-1 h-10 w-px bg-[#2a2a2a]" />
        <div className="w-[60px] pr-[5px] pt-1 text-right">
          <p>整列 :</p>
          <button aria-label="整列の基準" className="ml-auto flex h-7 items-center gap-[2px] pr-[3px]">
            <ArtboardGlyph />
            <Chevron />
          </button>
        </div>
      </div>
    </section>
  );
}

function ArtboardGlyph() {
  return (
    <Svg w={13} h={12}>
      <path d="M3 0v3.500M0 3h3" stroke="#b0b0b0" />
      <path d="M3.500 3.500h6l3 2.500v5h-9Z" fill="#555" stroke="#b8b8b8" />
      <path d="M9.500 3.500V6h3" stroke="#b8b8b8" />
    </Svg>
  );
}

function TypeIcon({ children }: { children: ReactNode }) {
  return (
    <Svg w={18} h={16} className="overflow-visible">
      <g fill="#c0c0c0" stroke="none" fontFamily={SERIF} fontWeight="700">
        {children}
      </g>
    </Svg>
  );
}

const ARROW_V = "M2 2v12M.3 4 2 2l1.700 2M.3 12 2 14l1.700-2";
const ARROW_H = "M3 14h11M5 12.300 3 14l2 1.700M12 12.300 14 14l-2 1.700";

function KanaIcon({ left = false, right = false }: { left?: boolean; right?: boolean }) {
  return (
    <Svg w={18} h={16} className="overflow-visible">
      <text x="3" y="9" fontSize="9" fill="#c0c0c0" fontFamily="'Noto Sans CJK JP', sans-serif">あ</text>
      {left && <path d="M1.500 1v8" stroke="#999" strokeDasharray="1 1" />}
      {(right || left) && <path d="M13.500 1v8" stroke="#999" strokeDasharray="1 1" />}
      {left && <path d="M0 13h6M4 11l2 2-2 2" stroke="#c0c0c0" />}
      {right && <path d="M15 13H9M11 11l-2 2 2 2" stroke="#c0c0c0" />}
    </Svg>
  );
}

function CharacterPanel() {
  return (
    <section className="mt-[3px] h-[267px] shrink-0 bg-[#323232]">
      <Tabs items={["文字", "段落", "OpenType"]} active={0} collapsible />
      <div className="pl-1 pr-1 text-[10px] leading-4 text-[#c4c4c4]">
        <label className="mt-[5px] flex h-[17px] w-[205px] items-stretch rounded-[2px] border border-[#3c3c3c] bg-[#262626]">
          <span className="grid w-[17px] place-items-center">
            <SearchGlyph />
          </span>
          <input aria-label="フォントファミリ" defaultValue="小塚ゴシック Pr6N" className="min-w-0 flex-1 bg-transparent pl-1 outline-none" />
          <span className="grid w-[15px] place-items-center border-l border-[#3c3c3c]">
            <Chevron />
          </span>
        </label>
        <Field label="フォントスタイル" value="R" steps={false} className="mt-[5px] w-[210px]" />
        <Divider className="mt-[5px]" />
        <div className="mt-1 flex flex-col gap-[5px]">
          <div className="flex items-center">
            <TypeIcon>
              <text x="0" y="14" fontSize="10">T</text>
              <text x="5" y="14" fontSize="16">T</text>
            </TypeIcon>
            <Field label="フォントサイズ" value="12 pt" />
            <span className="ml-[18px] flex">
              <TypeIcon>
                <path d={ARROW_V} stroke="#c0c0c0" />
                <text x="7" y="6" fontSize="7" fontWeight="400" fontFamily={SANS}>A</text>
                <text x="7" y="15" fontSize="7" fontWeight="400" fontFamily={SANS}>A</text>
                <path d="M5 7.500h9" stroke="#c0c0c0" />
              </TypeIcon>
              <Field label="行送り" value="(21 pt)" />
            </span>
          </div>
          <div className="flex items-center">
            <TypeIcon>
              <path d={ARROW_V} stroke="#c0c0c0" />
              <text x="5" y="14" fontSize="16">T</text>
            </TypeIcon>
            <Field label="垂直比率" value="100%" />
            <span className="ml-[18px] flex">
              <TypeIcon>
                <text x="3" y="11" fontSize="15">T</text>
                <path d={ARROW_H} stroke="#c0c0c0" />
              </TypeIcon>
              <Field label="水平比率" value="100%" />
            </span>
          </div>
          <div className="flex items-center">
            <TypeIcon>
              <text x="0" y="10" fontSize="11" fontWeight="400" fontFamily={SANS}>V</text>
              <text x="7" y="10" fontSize="11" fontWeight="400" fontFamily={SANS}>A</text>
              <path d="M4 12 9 1M14 13.500H8M10 11.500l-2 2 2 2" stroke="#c0c0c0" strokeWidth=".9" />
            </TypeIcon>
            <Field label="カーニング" value="0" />
            <span className="ml-[18px] flex">
              <TypeIcon>
                <rect x="0" y="1" width="16" height="10" fill="#c0c0c0" />
                <text x="1" y="10" fontSize="11" fill="#262626" fontFamily={SANS}>V</text>
                <text x="8" y="10" fontSize="11" fill="#262626" fontFamily={SANS}>A</text>
                <path d={ARROW_H} stroke="#c0c0c0" />
              </TypeIcon>
              <Field label="トラッキング" value="0" />
            </span>
          </div>
        </div>
        <Divider className="mt-1" />
        <div className="mt-[5px] flex flex-col gap-[5px]">
          <div className="flex items-center">
            <KanaIcon left right />
            <Field label="文字ツメ" value="0%" />
          </div>
          <div className="flex items-center">
            <KanaIcon left />
            <Select label="アキ (左)" value="自動" />
            <span className="ml-[18px] flex">
              <KanaIcon right />
              <Select label="アキ (右)" value="自動" />
            </span>
          </div>
        </div>
        <Divider className="mt-[5px]" />
        <div className="mt-1 flex items-center">
          <TypeIcon>
            <text x="0" y="12" fontSize="12" fontWeight="400" fontFamily={SANS}>A</text>
            <text x="9" y="8" fontSize="8" fontFamily={SANS}>a</text>
            <path d="M0 13.500h8M11.500 14V9.500M9.500 11.500l2-2 2 2" stroke="#c0c0c0" />
          </TypeIcon>
          <Field label="ベースラインシフト" value="0 pt" />
          <span className="ml-[18px] flex">
            <TypeIcon>
              <path d="M5.500 1.800a6.500 6.500 0 1 0 4.500 0M6 2C9 .5 11 1.500 12.500 3M13 .5v3h-3" stroke="#c0c0c0" fill="none" />
              <text x="4" y="12" fontSize="11">T</text>
            </TypeIcon>
            <Field label="文字回転" value="0°" />
          </span>
        </div>
        <Divider className="mt-1" />
        <div className="flex h-[21px] items-center pl-[2px] font-bold text-[#b8b8b8] [font-family:'Liberation_Serif',serif]">
          <button aria-label="オールキャップス" className="w-[27px] text-left text-xs">TT</button>
          <button aria-label="スモールキャップス" className="text-xs">
            T<span className="text-[9px]">T</span>
          </button>
          <button aria-label="上付き文字" className="ml-auto w-6 text-left text-xs">
            T<sup className="text-[7px]">1</sup>
          </button>
          <button aria-label="下付き文字" className="mr-[51px] text-xs">
            T<sub className="text-[7px]">1</sub>
          </button>
          <button aria-label="下線" className="mr-4 text-xs underline">T</button>
          <button aria-label="打ち消し線" className="mr-[5px] text-xs line-through">T</button>
        </div>
        <Divider />
        <div className="mt-1 flex items-center justify-between">
          <Select label="言語" value="英語 : 米国" className="w-24" />
          <span className="flex items-center">
            <span className="w-[18px] text-[#b8b8b8]">
              <span className="text-[10px]">a</span>
              <span className="align-[-2px] text-[10px]">a</span>
            </span>
            <Select label="アンチエイリアス" value="シャープ" />
          </span>
        </div>
      </div>
    </section>
  );
}

/* ---------- Swatches / Stroke / Artboards ---------- */

function Swatch({ color }: { color: string }) {
  if (color === "none") {
    return (
      <button aria-label="なし" className="h-[11px] overflow-hidden">
        <NoneSwatch />
      </button>
    );
  }
  if (color === "registration") {
    return (
      <button aria-label="レジストレーション" className="h-[11px] overflow-hidden">
        <Svg w={11} h={11}>
          <rect width="11" height="11" fill="#e6e6e6" />
          <circle cx="5.500" cy="5.500" r="3" stroke="#666" />
          <path d="M5.500 0v11M0 5.500h11M0 0l3 3M11 0 8 3M0 11l3-3M11 11 8 8" stroke="#777" strokeWidth=".8" />
        </Svg>
      </button>
    );
  }
  if (color === "white") {
    return (
      <button aria-label="ホワイト" className="grid h-[11px] place-items-center border border-white bg-[#222]">
        <span className="h-[7px] w-[7px] bg-white" />
      </button>
    );
  }
  return <button aria-label={`スウォッチ ${color}`} className="h-[11px]" style={{ background: color }} />;
}

function Folder() {
  return (
    <Svg w={11} h={11}>
      <path d="M1 2h4l1 1.500h4V9.500H1Z" fill="#b0b0b0" />
      <path d="M1.500 4.500h8" stroke="#555" strokeWidth=".7" />
    </Svg>
  );
}

function SwatchesPanel() {
  return (
    <section className="flex h-[185px] shrink-0 flex-col bg-[#323232]">
      <Tabs items={["カラー", "スウォッチ", "透明", "グラデーション"]} active={1} tight />
      <div className="flex h-[34px] shrink-0 justify-between pl-1 pr-[5px] pt-[6px]">
        <div className="relative w-6">
          <button aria-label="線スウォッチ" className="absolute left-[9px] top-[8px] grid h-[15px] w-[15px] place-items-center border border-[#a8a8a8] bg-black">
            <span className="h-[9px] w-[9px] border border-[#b8b8b8] bg-[#323232]" />
          </button>
          <button aria-label="塗りスウォッチ" className="absolute left-0 top-0 h-4 w-4 border border-[#ccc] bg-white" />
        </div>
        <div className="flex h-[19px] border border-[#3a3a3a]">
          <button aria-label="リスト表示" className="grid w-5 place-items-center">
            <Svg w={11} h={12}>
              <path d="M0 1.500h11M0 4.500h11M0 7.500h11M0 10.500h11" stroke="#c4c4c4" />
            </Svg>
          </button>
          <button aria-label="サムネール表示" className="grid w-5 place-items-center bg-[#1d1d1d]">
            <Svg w={12} h={12}>
              <path d="M0 0h3.300v3.300H0ZM4.300 0h3.300v3.300H4.300ZM8.700 0H12v3.300H8.700ZM0 4.300h3.300v3.300H0ZM4.300 4.300h3.300v3.300H4.300ZM8.700 4.300H12v3.300H8.700ZM0 8.700h3.300V12H0ZM4.300 8.700h3.300V12H4.300ZM8.700 8.700H12V12H8.700Z" fill="#ededed" />
            </Svg>
          </button>
        </div>
      </div>
      <div className="mx-1 flex-1 border border-[#3b3b3b]">
        <div className="grid w-[210px] grid-cols-18 gap-px">
          {SWATCH_ROWS.flat().map((c) => (
            <Swatch key={c} color={c} />
          ))}
        </div>
        {SWATCH_GROUPS.map((g) => (
          <div key={g[0]} className="mt-[2px] grid w-[210px] grid-cols-18 gap-px">
            <Folder />
            {g.map((c) => (
              <Swatch key={c} color={c} />
            ))}
          </div>
        ))}
      </div>
      <div className="flex h-4 shrink-0 items-center pl-2 pr-[23px]">
        <Svg w={13} h={10}>
          <path d="M1.500 0v10M4 0v10M6 .5 9.500 10" stroke="#b0b0b0" strokeWidth="1.600" />
          <path d="M11 8.500h1.500V10H11Z" fill="#b0b0b0" />
        </Svg>
        <Svg w={9} h={10} className="ml-[11px]">
          <path d="M6.500 1.500a3.500 3.500 0 1 0 0 7M3 5h3" stroke="#b0b0b0" strokeWidth="1" />
          <circle cx="3" cy="5" r="1.300" fill="#b0b0b0" />
          <circle cx="7" cy="1.700" r="1.200" fill="#b0b0b0" />
          <circle cx="7" cy="8.300" r="1.200" fill="#b0b0b0" />
        </Svg>
        <Svg w={16} h={10} className="ml-[9px]">
          <path d="M5 9.500H13a2.500 2.500 0 0 0 .5-5A4 4 0 0 0 6 3.500L9 6.500Z" fill="#b0b0b0" />
          <path d="M0 6.500h7M4.500 4 7 6.500 4.500 9" stroke="#b0b0b0" strokeWidth="1.200" />
        </Svg>
        <div className="ml-auto flex items-center gap-[11px]">
          <Svg w={12} h={10}>
            <path d="M0 0h9v10H0Z" fill="#b0b0b0" />
            <path d="M3 3h3M3 6h3M3 1v3M6 5v3M1 8h3" stroke="#323232" />
            <path d="M10.500 8.500H12V10h-1.500Z" fill="#b0b0b0" />
          </Svg>
          <Svg w={10} h={10}>
            <rect x=".5" y=".5" width="9" height="9" stroke="#b0b0b0" />
            <path d="M0 1h10M2 3.500h1M4 3.500h4.500M2 5.500h1M4 5.500h4.500M2 7.500h1M4 7.500h4.500" stroke="#b0b0b0" />
          </Svg>
          <Svg w={12} h={10}>
            <path d="M0 1h4.500l1 1.500H12V9.500H0Z" fill="#b0b0b0" />
            <path d="M0 3.700h12" stroke="#444" strokeWidth=".7" />
          </Svg>
          <NewGlyph />
          <TrashGlyph />
        </div>
      </div>
    </section>
  );
}

function NewGlyph() {
  return (
    <Svg w={9} h={9}>
      <path d="M0 0h9v9H4.500V4.500H0Z" fill="#b0b0b0" />
      <path d="M0 5.500h3.500V9Z" fill="#b0b0b0" />
    </Svg>
  );
}

function TrashGlyph({ dim = false }: { dim?: boolean }) {
  return (
    <Svg w={10} h={11} className={dim ? "opacity-40" : ""}>
      <path d="M0 2.500h10M3.500 2V.7h3V2M1.500 3v7.500h7V3M3.500 4.500v4.500M6.500 4.500v4.500" stroke="#b0b0b0" />
    </Svg>
  );
}

/* body shape, then the dark path line that runs through it, then its end node */
const STROKE_BUTTONS: Array<{ label: string; on: number; art: Array<[string, string, number, number]> }> = [
  {
    label: "線端",
    on: 0,
    art: [
      ["M3 0h8v11H3Z", "M4 5.500h7", 3, 5.5],
      ["M11 0H6a5.500 5.500 0 0 0 0 11h5Z", "M5 5.500h6", 5, 5.5],
      ["M0 0h11v11H0Z", "M4 5.500h7", 4, 5.5],
    ],
  },
  {
    label: "角の形状",
    on: 0,
    art: [
      ["M0 0h11v7H8v4H0Z", "M4.500 11V4.500H11", 4.5, 4.5],
      ["M6 0h5v7H8v4H0V6a6 6 0 0 1 6-6Z", "M4.500 11V4.500H11", 4.5, 4.5],
      ["M5 0h6v7H8v4H0V5Z", "M4.500 11V4.500H11", 4.5, 4.5],
    ],
  },
  {
    label: "線の位置",
    on: 1,
    art: [
      ["M0 0h7v4.500h4V11H0Z", "M3.500 0v7.500H11", 3.5, 7.5],
      ["M3 0h4v5h4v4H3Z", "M1.500 8v1.500H11", 2, 9],
      ["M0 0h5v5h6v6H0Z", "M5.500 0v5.500H11", 5, 5.5],
    ],
  },
];

function StrokeRow({ label, dim = false, children }: { label: string; dim?: boolean; children: ReactNode }) {
  return (
    <div className="flex h-[17px] items-center">
      <span className={`w-[72px] pr-[3px] text-right ${dim ? "text-[#6c6c6c]" : ""}`}>{label} :</span>
      {children}
    </div>
  );
}

function StrokePanel() {
  return (
    <section className="mt-[2px] h-[289px] shrink-0 bg-[#323232] text-[10px] leading-4 text-[#a6a6a6]">
      <Tabs items={["線", "アピアランス"]} active={0} collapsible />
      <div className="mt-[6px] flex flex-col gap-[5px]">
        <StrokeRow label="線幅">
          <Field label="線幅" value="1 pt" className="w-[84px]" />
        </StrokeRow>
        {STROKE_BUTTONS.map((r) => (
          <StrokeRow key={r.label} label={r.label}>
            <div className="flex h-[18px] border border-[#3a3a3a]">
              {r.art.map(([body, line, cx, cy], i) => (
                <button
                  key={body}
                  aria-label={`${r.label} ${i + 1}`}
                  className={`grid w-[18px] place-items-center ${i === r.on ? "bg-[#1b1b1b] text-[#f0f0f0]" : "text-[#ababab]"}`}
                >
                  <Svg w={11} h={11}>
                    <path d={body} fill="currentColor" />
                    <path d={line} stroke="#262626" />
                    <circle cx={cx} cy={cy} r="1.500" fill="#262626" stroke={cx < 4 && i === r.on ? "#f0f0f0" : "none"} />
                  </Svg>
                </button>
              ))}
            </div>
            {r.label === "角の形状" && (
              <>
                <span className="ml-[10px] w-7">比率 :</span>
                <Field label="比率" value="10" steps={false} drop={false} className="w-10" />
              </>
            )}
          </StrokeRow>
        ))}
      </div>
      <Divider className="ml-1 mr-[17px] mt-1" />
      <div className="ml-1 mr-[17px] flex h-[28px] items-center">
        <label className="flex items-center gap-1 pl-px text-[#bdbdbd]">
          <input type="checkbox" className="h-[10px] w-[10px] appearance-none rounded-[2px] border border-[#a8a8a8]" />
          破線
        </label>
        <div className="ml-auto flex h-[17px] border border-[#404040]">
          <button aria-label="線分と間隔の正確な長さを保持" className="grid w-[31px] place-items-center border-r border-[#404040]">
            <Svg w={23} h={10}>
              <path d="M.5 10V6M.5 3V.5H4M7 .5h4M14 .5h4M20 .5h2.500V5M.5 9.500H4" stroke="#777" />
            </Svg>
          </button>
          <button aria-label="コーナーやパス先端に破線の先端を整列" className="grid w-[31px] place-items-center">
            <Svg w={23} h={10}>
              <path d="M.5 4V.5H4M9 .5h5M19 .5h3.500V4M.5 6v3.500H4M9 9.500h5M19 9.500h3.500V6" stroke="#777" />
            </Svg>
          </button>
        </div>
      </div>
      <div className="ml-1 mr-[17px] grid grid-cols-6 gap-1 text-center text-[#5e5e5e]">
        {["線分", "間隔", "線分", "間隔", "線分", "間隔"].map((t, i) => (
          <label key={i} className="block">
            <input disabled className="block h-[17px] w-full rounded-[2px] bg-[#373737]" />
            <span className="block">{t}</span>
          </label>
        ))}
      </div>
      <Divider className="ml-1 mr-[17px] mt-[3px]" />
      <div className="mt-[6px] flex flex-col gap-2">
        <StrokeRow label="矢印" dim>
          <span className="h-[17px] w-[41px] bg-[#666]" />
          <DropButton label="始点の矢印" dim />
          <span className="ml-2 h-[17px] w-[41px] bg-[#666]" />
          <DropButton label="終点の矢印" dim />
          <Svg w={11} h={11} className="ml-[9px]">
            <path d="M0 3h8M1 8h10" stroke="#777" strokeWidth="1.200" />
            <path d="M7 0v6l4-3ZM4 5v6L0 8Z" fill="#777" />
          </Svg>
        </StrokeRow>
        <StrokeRow label="倍率" dim>
          <Field label="始点の倍率" value="100%" dim drop={false} className="w-14" />
          <Field label="終点の倍率" value="100%" dim drop={false} className="ml-2 w-14" />
          <Svg w={12} h={14} className="ml-[9px]">
            <rect x="3.500" y="1" width="5" height="6" rx="2.500" stroke="#777" strokeWidth="1.200" />
            <rect x="3.500" y="7" width="5" height="6" rx="2.500" stroke="#777" strokeWidth="1.200" />
            <path d="m0 1 12 12" stroke="#777" strokeWidth="1.200" />
          </Svg>
        </StrokeRow>
        <StrokeRow label="先端位置" dim>
          <div className="flex h-[18px] border border-[#404040]">
            {[
              ["M1 1.500h5M0 5.500h8", "M6.500 2.500v6l4-3Z"],
              ["M0 1.500h11M0 5.500h8", "M6.500 2.500v6l4-3Z"],
            ].map(([line, head], i) => (
              <button key={line} aria-label={`先端位置 ${i + 1}`} className="grid w-[18px] place-items-center border-r border-[#404040] last:border-r-0">
                <Svg w={11} h={9}>
                  <path d={line} stroke="#777" />
                  <path d={head} fill="#777" />
                </Svg>
              </button>
            ))}
          </div>
        </StrokeRow>
      </div>
      <Divider className="mb-[5px] ml-1 mr-[17px] mt-[5px]" />
      <StrokeRow label="プロファイル" dim>
        <span className="h-[17px] w-[85px] bg-[#666]" />
        <DropButton label="プロファイル" dim />
        <Svg w={12} h={9} className="ml-2">
          <path d="M.5 1v7l3.500-3.500ZM6 0v9" stroke="#777" />
          <path d="M11.500.500v8l-4-4Z" fill="#777" />
        </Svg>
        <Svg w={9} h={12} className="ml-[11px]">
          <path d="M1 11.500h7L4.500 8ZM0 6h9" stroke="#777" />
          <path d="M.5.500h8l-4 4Z" fill="#777" />
        </Svg>
      </StrokeRow>
    </section>
  );
}

function ArtboardsPanel() {
  return (
    <section className="mt-[2px] flex min-h-0 flex-1 flex-col bg-[#323232]">
      <Tabs items={["レイヤー", "アートボード"]} active={1} />
      <div className="mx-1 mt-[5px] min-h-0 flex-1 border border-[#3e3e3e]">
        <table className="w-full border-collapse text-[10px] leading-[15px] text-[#c4c4c4]">
          <tbody>
            <tr className="border-b border-[#3e3e3e]">
              <td className="w-[34px] border-r border-[#3e3e3e] pl-1">1</td>
              <td className="border-r border-[#3e3e3e] pl-1">アートボード 1</td>
              <td className="w-[34px] pl-[5px]">
                <ArtboardGlyph />
              </td>
            </tr>
          </tbody>
        </table>
      </div>
      <div className="flex h-[17px] shrink-0 items-center pl-[9px] pr-[23px]">
        <Svg w={10} h={10}>
          <path d="M0 0h4v3H0ZM6 0h4v3H6ZM0 7h4v3H0ZM6 7h4v3H6Z" fill="#5c5c5c" />
          <path d="m3 3 4 4M7 3 3 7" stroke="#5c5c5c" />
        </Svg>
        <div className="ml-auto flex items-center gap-3">
          <Svg w={9} h={10}>
            <path d="M4.500 0 9 5H6v5H3V5H0Z" fill="#5c5c5c" />
          </Svg>
          <Svg w={9} h={10}>
            <path d="M4.500 10 0 5h3V0h3v5h3Z" fill="#5c5c5c" />
          </Svg>
          <NewGlyph />
          <TrashGlyph dim />
        </div>
      </div>
    </section>
  );
}

export default function App() {
  return (
    <div className="flex h-screen min-w-[1100px] flex-col overflow-hidden bg-[#1f1f1f] [font-family:Inter,'Noto_Sans_CJK_JP',sans-serif]">
      <MenuBar />
      <TitleBar />
      <ControlBar />
      <div className="flex min-h-0 flex-1">
        <ToolPalette />
        <DocumentWindow />
        <aside className="flex w-[223px] shrink-0 flex-col border-l-2 border-r-3 border-[#222] bg-[#262626]">
          <CollapseStrip />
          <TransformPanel />
          <AlignPanel />
          <CharacterPanel />
          <div className="mt-[1px] flex-1 bg-[#2d2d2d]" />
        </aside>
        <aside className="flex w-[233px] shrink-0 flex-col border-r border-[#222] bg-[#262626]">
          <CollapseStrip />
          <SwatchesPanel />
          <StrokePanel />
          <ArtboardsPanel />
        </aside>
      </div>
    </div>
  );
}
